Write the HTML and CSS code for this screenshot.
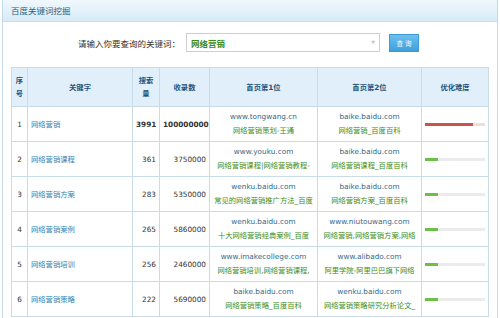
FILE: index.html
```html
<!DOCTYPE html>
<html lang="zh-CN">
<head>
    <meta charset="UTF-8">
    <title>百度关键词挖掘</title>
    <link rel="stylesheet" href="styles.css">
</head>
<body>

    <div class="panel">
        <div class="panel-head">百度关键词挖掘</div>

        <div class="search">
            <label for="kw">请输入你要查询的关键词：</label>
            <div class="combo">
                <input type="text" id="kw" value="网络营销" />
                <span class="arrow">&#9660;</span>
            </div>
            <button class="btn">查 询</button>
        </div>

        <table class="grid">
            <colgroup>
                <col style="width:16px">
                <col style="width:105px">
                <col style="width:27px">
                <col style="width:50px">
                <col style="width:108px">
                <col style="width:104px">
                <col style="width:67px">
            </colgroup>
            <thead>
                <tr>
                    <th>序号</th>
                    <th>关键字</th>
                    <th>搜索量</th>
                    <th>收录数</th>
                    <th>首页第1位</th>
                    <th>首页第2位</th>
                    <th>优化难度</th>
                </tr>
            </thead>
            <tbody>
                <tr class="hot">
                    <td class="idx">1</td>
                    <td class="kw"><a href="#">网络营销</a></td>
                    <td class="num">3991</td>
                    <td class="num">100000000</td>
                    <td class="site"><div class="url">www.tongwang.cn</div><div class="desc">网络营销策划-王通</div></td>
                    <td class="site"><div class="url">baike.baidu.com</div><div class="desc">网络营销_百度百科</div></td>
                    <td><div class="bar hard"><div class="fill" style="width:80%"></div></div></td>
                </tr>
                <tr>
                    <td class="idx">2</td>
                    <td class="kw"><a href="#">网络营销课程</a></td>
                    <td class="num">361</td>
                    <td class="num">3750000</td>
                    <td class="site"><div class="url">www.youku.com</div><div class="desc">网络营销课程|网络营销教程-</div></td>
                    <td class="site"><div class="url">baike.baidu.com</div><div class="desc">网络营销课程_百度百科</div></td>
                    <td><div class="bar"><div class="fill" style="width:21%"></div></div></td>
                </tr>
                <tr>
                    <td class="idx">3</td>
                    <td class="kw"><a href="#">网络营销方案</a></td>
                    <td class="num">283</td>
                    <td class="num">5350000</td>
                    <td class="site"><div class="url">wenku.baidu.com</div><div class="desc">常见的网络营销推广方法_百度</div></td>
                    <td class="site"><div class="url">baike.baidu.com</div><div class="desc">网络营销方案_百度百科</div></td>
                    <td><div class="bar"><div class="fill" style="width:21%"></div></div></td>
                </tr>
                <tr>
                    <td class="idx">4</td>
                    <td class="kw"><a href="#">网络营销案例</a></td>
                    <td class="num">265</td>
                    <td class="num">5860000</td>
                    <td class="site"><div class="url">wenku.baidu.com</div><div class="desc">十大网络营销经典案例_百度</div></td>
                    <td class="site"><div class="url">www.niutouwang.com</div><div class="desc">网络营销,网络营销方案,网络</div></td>
                    <td><div class="bar"><div class="fill" style="width:21%"></div></div></td>
                </tr>
                <tr>
                    <td class="idx">5</td>
                    <td class="kw"><a href="#">网络营销培训</a></td>
                    <td class="num">256</td>
                    <td class="num">2460000</td>
                    <td class="site"><div class="url">www.imakecollege.com</div><div class="desc">网络营销培训,网络营销课程,</div></td>
                    <td class="site"><div class="url">www.alibado.com</div><div class="desc">阿里学院-阿里巴巴旗下网络</div></td>
                    <td><div class="bar"><div class="fill" style="width:21%"></div></div></td>
                </tr>
                <tr>
                    <td class="idx">6</td>
                    <td class="kw"><a href="#">网络营销策略</a></td>
                    <td class="num">222</td>
                    <td class="num">5690000</td>
                    <td class="site"><div class="url">baike.baidu.com</div><div class="desc">网络营销策略_百度百科</div></td>
                    <td class="site"><div class="url">wenku.baidu.com</div><div class="desc">网络营销策略研究分析论文_</div></td>
                    <td><div class="bar"><div class="fill" style="width:21%"></div></div></td>
                </tr>
            </tbody>
        </table>
    </div>

</body>
</html>
```

FILE: styles.css
```css
body {
    margin: 0;
    padding: 0;
    background-color: #fff;
    font-family: "DejaVu Sans", "Noto Sans CJK SC", sans-serif;
    color: #333;
}
.panel {
    margin: 0 2px; /* thin frame round the whole box */
    border: 1px solid #c4dae8;
    border-top: none;
    height: 330px;
}
.panel-head {
    height: 21px;
    line-height: 22px;
    padding-left: 8px;
    font-size: 8.5px;
    color: #2c6483;
    background: linear-gradient(#f0f8fd, #d6ebf8);
    border-bottom: 1px solid #c6deec;
}
.search {
    display: flex;
    align-items: center;
    margin-top: 11px;
    padding-left: 75px;
    font-size: 8.5px;
}
.search label {
    color: #333;
}
.combo {
    position: relative;
    margin-left: 6px;
}
.combo input {
    width: 194px;
    height: 19px;
    box-sizing: border-box;
    border: 1px solid #cfcfcf;
    padding: 0 4px;
    font-family: inherit;
    font-size: 8.5px;
    font-weight: bold;
    color: #3a8c1f;
    outline: none;
}
.combo .arrow {
    position: absolute; /* dropdown caret sits over the input */
    right: 5px;
    top: 6px;
    font-size: 5px;
    color: #c8c8c8;
}
.btn {
    margin-left: 9px;
    width: 30px;
    height: 18px;
    padding: 0;
    border: 1px solid #3d9ad3;
    background: linear-gradient(#6cc0ee, #3f9fdc);
    color: #fff;
    font-family: inherit;
    font-size: 6.5px;
}
.grid {
    margin: 15px 0 0 8px;
    width: 477px;
    table-layout: fixed;
    border-collapse: collapse;
    font-size: 7.3px;
}
.grid th, .grid td {
    border: 1px solid #c9dbe7;
    padding: 0 3px;
}
.grid th {
    height: 38px;
    background-color: #e0eff9;
    color: #1f5378;
    font-weight: bold;
    line-height: 13px;
}
.grid td {
    height: 34px;
}
.grid .idx {
    text-align: center;
    padding: 0;
}
.grid .kw a {
    color: #2d83b1;
    text-decoration: none;
}
.grid .num {
    text-align: right;
}
.grid .hot .num {
    font-weight: bold;
}
.grid .site {
    text-align: center;
    line-height: 14px;
}
.site .url {
    color: #34698b;
    white-space: nowrap;
    overflow: hidden;
}
.site .desc {
    color: #3d8d22;
    white-space: nowrap;
    overflow: hidden;
}
.bar {
    height: 3px;
    background-color: #ebebeb;
    margin: 0 0 0 0;
}
.bar .fill {
    height: 100%;
    background-color: #6cc04a;
}
.bar.hard {
    background-color: #f6dada;
}
.bar.hard .fill {
    background-color: #c8554b;
}
```
